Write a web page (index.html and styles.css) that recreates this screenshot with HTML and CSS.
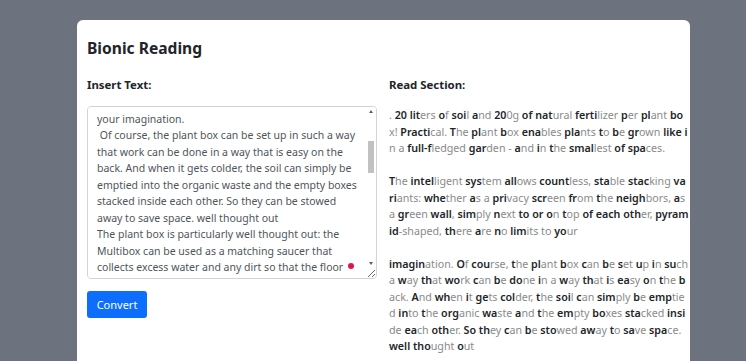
FILE: index.html
```html
<!DOCTYPE html>
<html lang="en">
<head>
    <meta charset="UTF-8">
    <meta name="viewport" content="width=device-width, initial-scale=1.0">
    <title>Bionic Reading</title>
    <link rel="stylesheet" href="styles.css">
</head>
<body>
    <div class="card">
        <h1 class="title">Bionic Reading</h1>
        <div class="row">
            <div class="col">
                <h2 class="label">Insert Text:</h2>
                <div class="input-wrap">
                    <textarea class="input">. 20 liters of soil and 200g of natural fertilizer per plant box! Practical. The plant box enables plants to be grown like in a full-fledged garden - and in the smallest of spaces.
The intelligent system allows countless, stable stacking variants: whether as a privacy screen from the neighbors, as a green wall, simply next to or on top of each other, pyramid-shaped, there are no limits to
your imagination.
 Of course, the plant box can be set up in such a way that work can be done in a way that is easy on the back. And when it gets colder, the soil can simply be emptied into the organic waste and the empty boxes stacked inside each other. So they can be stowed away to save space. well thought out
The plant box is particularly well thought out: the Multibox can be used as a matching saucer that collects excess water and any dirt so that the floor stays clean. At the same time, the Multibox also protects the plants from waterlogging.</textarea>
                    <div class="scroll">
                        <span class="arrow up"></span>
                        <span class="thumb"></span>
                        <span class="arrow down"></span>
                    </div>
                    <span class="dot"></span>
                </div>
                <button class="btn">Convert</button>
            </div>
            <div class="col read">
                <h2 class="label">Read Section:</h2>
                <div class="output">
                    <p>. <b>20</b> <b>lit</b>ers <b>o</b>f <b>soi</b>l <b>a</b>nd <b>20</b>0g <b>of</b> <b>nat</b>ural <b>ferti</b>lizer <b>p</b>er <b>pl</b>ant <b>bo</b>x! <b>Practi</b>cal. <b>T</b>he <b>pl</b>ant <b>b</b>ox <b>ena</b>bles <b>pla</b>nts <b>t</b>o <b>b</b>e <b>gr</b>own <b>like</b> <b>i</b>n a <b>full-f</b>ledged <b>gar</b>den - <b>a</b>nd <b>i</b>n <b>t</b>he <b>smal</b>lest <b>of</b> <b>spa</b>ces.</p>
                    <p><b>T</b>he <b>intel</b>ligent <b>sys</b>tem <b>all</b>ows <b>count</b>less, <b>sta</b>ble <b>stac</b>king <b>vari</b>ants: <b>whe</b>ther <b>a</b>s a <b>pri</b>vacy <b>scr</b>een <b>fr</b>om <b>t</b>he <b>neigh</b>bors, <b>a</b>s a <b>gr</b>een <b>wall</b>, <b>sim</b>ply <b>n</b>ext <b>to</b> <b>or</b> <b>o</b>n <b>t</b>op <b>of</b> <b>each</b> <b>oth</b>er, <b>pyramid</b>-shaped, <b>th</b>ere <b>a</b>re <b>n</b>o <b>lim</b>its to <b>yo</b>ur</p>
                    <p><b>imagin</b>ation. <b>O</b>f <b>cou</b>rse, <b>t</b>he <b>pl</b>ant <b>b</b>ox <b>c</b>an <b>b</b>e <b>s</b>et <b>u</b>p <b>i</b>n <b>su</b>ch a <b>w</b>ay <b>th</b>at <b>wo</b>rk <b>c</b>an <b>b</b>e <b>do</b>ne <b>i</b>n a <b>w</b>ay <b>th</b>at <b>i</b>s <b>ea</b>sy <b>o</b>n <b>t</b>he <b>b</b>ack. <b>A</b>nd <b>wh</b>en <b>i</b>t <b>ge</b>ts <b>col</b>der, <b>t</b>he <b>soi</b>l <b>c</b>an <b>sim</b>ply <b>b</b>e <b>emp</b>tied <b>in</b>to <b>t</b>he <b>org</b>anic <b>wa</b>ste <b>a</b>nd <b>t</b>he <b>em</b>pty <b>bo</b>xes <b>sta</b>cked <b>insi</b>de <b>ea</b>ch <b>oth</b>er. <b>So</b> <b>th</b>ey <b>c</b>an <b>b</b>e <b>sto</b>wed <b>aw</b>ay <b>t</b>o <b>sa</b>ve <b>spa</b>ce. <b>well</b> <b>tho</b>ught <b>o</b>ut</p>
                </div>
            </div>
        </div>
    </div>

    <script>
        // 입력창을 "your imagination." 줄이 맨 위에 오도록 스크롤
        const input = document.querySelector('.input');
        const full = input.value;
        const cut = full.indexOf('your imagination');

        input.style.height = '0px';
        input.value = full.slice(0, cut);
        const before = input.scrollHeight;
        input.value = full;
        input.style.height = '';

        const lineHeight = parseFloat(getComputedStyle(input).lineHeight);
        const padBottom = parseFloat(getComputedStyle(input).paddingBottom);
        input.scrollTop = before - lineHeight - padBottom - 4;
    </script>
</body>
</html>
```

FILE: styles.css
```css
body {
    margin: 0;
    background-color: #6c737f;
    font-family: "Noto Sans", sans-serif;
    color: #212529;
}

.card {
    margin: 20px 0 0 77px;
    width: 613px;
    height: 360px;
    background-color: #fff;
    border-radius: 6px;
    padding: 18px 1px 0 10px;
    box-sizing: border-box;
}

.title {
    margin: 0;
    font-size: 15.6px;
    font-weight: 700;
    line-height: 20px;
}

.row {
    display: flex;
    gap: 12px;
    margin-top: 19px;
}

.col {
    width: 290px;
}

.read {
    width: 300px;
}

.label {
    margin: 0 0 13px;
    font-size: 11.4px;
    font-weight: 700;
    line-height: 16px;
}

.input-wrap {
    position: relative;
}

.input {
    display: block;
    width: 290px;
    height: 173px;
    box-sizing: border-box;
    border: 1px solid #ced4da;
    border-radius: 4px;
    padding: 3px 17px 3px 9px;
    font-family: inherit;
    font-size: 10.5px;
    line-height: 16.5px;
    color: #4f555b;
    resize: vertical;
    scrollbar-width: none;
}

.scroll {
    position: absolute;
    top: 1px;
    right: 1px;
    bottom: 12px;
    width: 10px;
}

.thumb {
    position: absolute;
    top: 34px;
    left: 2px;
    width: 6px;
    height: 32px;
    background-color: #c1c1c1;
}

.arrow {
    position: absolute;
    left: 3px;
    width: 0;
    height: 0;
    border-left: 2px solid transparent;
    border-right: 2px solid transparent;
}

.arrow.up {
    top: 3px;
    border-bottom: 3px solid #606060;
}

.arrow.down {
    bottom: 2px;
    border-top: 3px solid #606060;
}

.dot {
    position: absolute;
    left: 261px;
    top: 157px;
    width: 6px;
    height: 6px;
    border-radius: 50%;
    background-color: #e2154a;
}

.btn {
    margin-top: 12px;
    width: 60px;
    height: 27px;
    border: none;
    border-radius: 3px;
    background-color: #0d6efd;
    color: #fff;
    font-family: inherit;
    font-size: 11px;
    padding: 0;
}

.output {
    padding-top: 1px;
    font-size: 10.7px;
    line-height: 16.5px;
    color: #8a8a8a;
    word-break: break-all;
}

.output p {
    margin: 0 0 16.5px;
}

.output b {
    font-weight: 600;
    color: #212529;
}
```
